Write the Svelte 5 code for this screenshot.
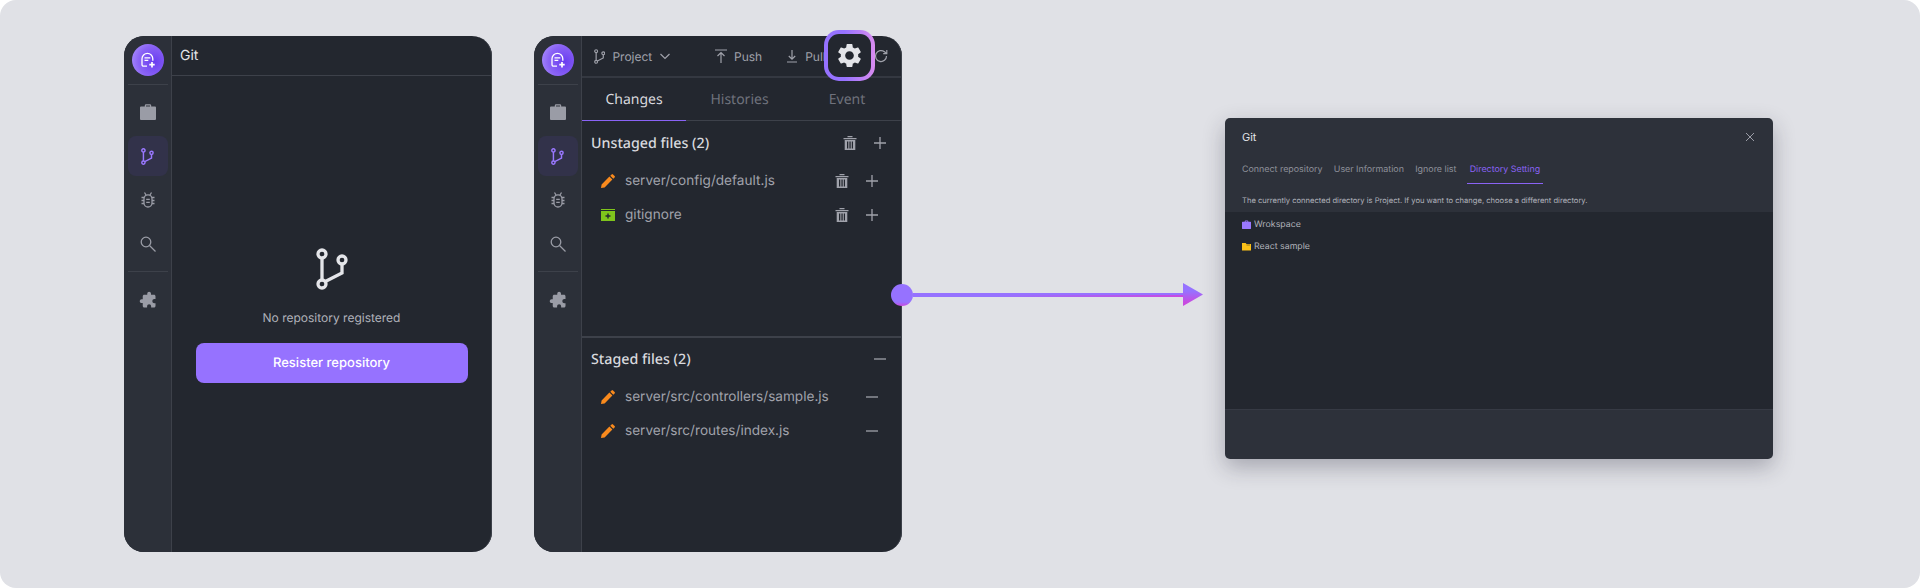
<script>
  const navIcons = ['case', 'git', 'bug', 'search'];

  const unstaged = [
    { name: 'server/config/default.js', icon: 'pencil' },
    { name: 'gitignore', icon: 'box' }
  ];
  const staged = [
    { name: 'server/src/controllers/sample.js', icon: 'pencil' },
    { name: 'server/src/routes/index.js', icon: 'pencil' }
  ];
  const modalTabs = ['Connect repository', 'User Information', 'Ignore list', 'Directory Setting'];
</script>

{#snippet gitIcon(height, color, width = 3.3)}
  <svg width={height * 32 / 42} {height} viewBox="0 0 32 42" fill="none" stroke={color} stroke-width={width}>
    <circle cx="6" cy="6" r="4" />
    <circle cx="6" cy="36" r="4" />
    <circle cx="26" cy="12" r="4" />
    <path d="M6 10v22M9.300 33.500L26 25V16" />
  </svg>
{/snippet}

{#snippet navIcon(name)}
  {#if name === 'case'}
    <svg width="18" height="18" viewBox="0 0 18 18" fill="#9a9ca6">
      <path d="M5.800 3.500V2.600A1.300 1.300 0 0 1 7.100 1.300h3.800a1.300 1.300 0 0 1 1.300 1.300v.9H16a1 1 0 0 1 1 1V16a1 1 0 0 1-1 1H2a1 1 0 0 1-1-1V4.500a1 1 0 0 1 1-1zM7 2.500v1h4v-1z" fill-rule="evenodd" />
    </svg>
  {:else if name === 'git'}
    {@render gitIcon(17, '#9a78ff', 3.6)}
  {:else if name === 'bug'}
    <svg width="18" height="18" viewBox="0 0 18 18" fill="none" stroke="#9a9ca6" stroke-width="1.300">
      <rect x="5" y="3.800" width="8" height="12.200" rx="4" />
      <path d="M7.200 8.300h3.600M7.200 11.300h3.600M5.500 1.500l1.500 2.500M12.500 1.500l-1.500 2.500M2.500 6.500h2.500M2.500 9.500h2.500M2.500 12.500h2.500M13 6.500h2.500M13 9.500h2.500M13 12.500h2.500" />
    </svg>
  {:else}
    <svg width="18" height="18" viewBox="0 0 18 18" fill="none" stroke="#9a9ca6" stroke-width="1.300">
      <circle cx="7" cy="7" r="4.800" />
      <path d="M10.500 10.500l6 6" />
    </svg>
  {/if}
{/snippet}

{#snippet sidebar()}
  <aside class="sidebar">
    <div class="logo">
      <svg width="16" height="16" viewBox="0 0 16 16" fill="none" stroke="#fff" stroke-width="1.300">
        <path d="M7 14.200H3.500A1.500 1.500 0 0 1 2 12.700V6.800a5.400 5.400 0 0 1 10.800 0v2" />
        <path d="M4.500 5.800h5.800M4.500 8.300h3.800" stroke-width="1.200" />
        <path d="M12 10v5.400M9.300 12.700h5.400" stroke-width="1.700" />
      </svg>
    </div>
    <div class="rule"></div>
    <nav class="nav">
      {#each navIcons as icon}
        <div class="nav-item" class:active={icon === 'git'}>
          {@render navIcon(icon)}
        </div>
      {/each}
    </nav>
    <div class="rule"></div>
    <div class="nav-item">
      <svg class="puzzle" width="18" height="18" viewBox="0 0 24 24" fill="#9a9ca6">
        <path d="M20.500 11H19V7c0-1.100-.9-2-2-2h-4V3.500C13 2.120 11.880 1 10.500 1S8 2.120 8 3.500V5H4c-1.100 0-1.990.9-1.990 2v3.800H3.500c1.490 0 2.700 1.210 2.700 2.700s-1.210 2.700-2.700 2.700H2V20c0 1.100.9 2 2 2h3.800v-1.500c0-1.490 1.210-2.700 2.700-2.700 1.490 0 2.700 1.210 2.700 2.700V22H17c1.100 0 2-.9 2-2v-4h1.500c1.380 0 2.500-1.120 2.500-2.500S21.880 11 20.500 11z" />
      </svg>
    </div>
  </aside>
{/snippet}

{#snippet fileIcon(kind)}
  {#if kind === 'pencil'}
    <svg width="14" height="14" viewBox="0 0 14 14" fill="#f98a1d">
      <path d="M0 14l.6-3.600L8.400 2.600l3 3-7.800 7.800zM9.300 1.700L10.600.4a1 1 0 0 1 1.400 0l1.600 1.600a1 1 0 0 1 0 1.400l-1.300 1.300z" />
    </svg>
  {:else}
    <svg width="14" height="14" viewBox="0 0 14 14">
      <path d="M0 1h14v1H0z" fill="#7fc41c" />
      <path d="M0 3h14v10H0z" fill="#7fc41c" />
      <path d="M7 5.500v5M4.500 8h5" stroke="#23272f" stroke-width="1.400" />
    </svg>
  {/if}
{/snippet}

{#snippet trash()}
  <svg class="act" width="14" height="14" viewBox="0 0 14 14" fill="#a0a2ab">
    <path d="M0.500 2h13v1.300H.500zM4.500 0h5v1.300h-5zM1.700 4h10.600v10H1.700zM4 5.500v7h1.300v-7zM6.400 5.500v7h1.300v-7zM8.800 5.500v7H10v-7z" fill-rule="evenodd" />
  </svg>
{/snippet}

{#snippet plus()}
  <svg class="act" width="14" height="14" viewBox="0 0 14 14" stroke="#a0a2ab" stroke-width="1.300">
    <path d="M7 1v12M1 7h12" />
  </svg>
{/snippet}

{#snippet minus()}
  <svg class="act" width="14" height="14" viewBox="0 0 14 14" stroke="#a0a2ab" stroke-width="1.300">
    <path d="M1 7h12" />
  </svg>
{/snippet}

<main class="page">
  <section class="panel">
    {@render sidebar()}
    <div class="content">
      <header class="title-bar">Git</header>
      <div class="empty">
        {@render gitIcon(42, '#e4e5e9')}
        <p class="empty-text">No repository registered</p>
        <button class="primary">Resister repository</button>
      </div>
    </div>
  </section>

  <section class="panel">
    {@render sidebar()}
    <div class="content">
      <header class="toolbar">
        <div class="branch">
          {@render gitIcon(15, '#a0a2ab')}
          <span>Project</span>
          <svg width="12" height="12" viewBox="0 0 12 12" fill="none" stroke="#a0a2ab" stroke-width="1.200"><path d="M1.500 4l4.500 4.500L10.500 4" /></svg>
        </div>
        <div class="tool">
          <svg width="14" height="14" viewBox="0 0 14 14" fill="none" stroke="#a0a2ab" stroke-width="1.200"><path d="M1 1h12M7 14V3.500M3.500 7L7 3.500 10.500 7" /></svg>
          <span>Push</span>
        </div>
        <div class="tool pull">
          <svg width="14" height="14" viewBox="0 0 14 14" fill="none" stroke="#a0a2ab" stroke-width="1.200"><path d="M2 13h10M7 1v9M3.800 7L7 10.200 10.200 7" /></svg>
          <span>Pull</span>
        </div>
        <svg class="refresh" width="14" height="14" viewBox="0 0 14 14" fill="none" stroke="#a0a2ab" stroke-width="1.200"><path d="M12.500 7A5.500 5.500 0 1 1 10.500 2.800L12.500 4.500M12.800 1v3.600H9.200" /></svg>
      </header>

      <div class="tabs">
        <div class="tab current">Changes</div>
        <div class="tab histories">Histories</div>
        <div class="tab event">Event</div>
      </div>

      <div class="group unstaged">
        <div class="group-head">
          <h2>Unstaged files (2)</h2>
          <div class="acts">{@render trash()}{@render plus()}</div>
        </div>
        {#each unstaged as file}
          <div class="file">
            {@render fileIcon(file.icon)}
            <span class="file-name">{file.name}</span>
            <div class="acts">{@render trash()}{@render plus()}</div>
          </div>
        {/each}
      </div>

      <div class="group">
        <div class="group-head">
          <h2>Staged files (2)</h2>
          <div class="acts">{@render minus()}</div>
        </div>
        {#each staged as file}
          <div class="file">
            {@render fileIcon(file.icon)}
            <span class="file-name">{file.name}</span>
            <div class="acts">{@render minus()}</div>
          </div>
        {/each}
      </div>
    </div>

    <div class="ring">
      <svg width="29" height="29" viewBox="0 0 24 24" fill="#e4e5e9">
        <path d="M19.140 12.940c.04-.3.06-.61.06-.94 0-.32-.02-.64-.07-.94l2.030-1.580c.18-.14.23-.41.12-.61l-1.920-3.320c-.12-.22-.37-.29-.59-.22l-2.390.96c-.5-.38-1.030-.7-1.620-.94l-.36-2.540c-.04-.24-.24-.41-.48-.41h-3.840c-.24 0-.43.17-.47.41l-.36 2.540c-.59.24-1.130.57-1.620.94l-2.390-.96c-.22-.08-.47 0-.59.22L2.740 8.870c-.12.21-.08.47.12.61l2.030 1.580c-.05.3-.09.63-.09.94s.02.64.07.94l-2.030 1.580c-.18.14-.23.41-.12.61l1.920 3.320c.12.22.37.29.59.22l2.390-.96c.5.38 1.030.7 1.620.94l.36 2.540c.05.24.24.41.48.41h3.840c.24 0 .44-.17.47-.41l.36-2.540c.59-.24 1.130-.56 1.620-.94l2.390.96c.22.08.47 0 .59-.22l1.920-3.320c.12-.22.07-.47-.12-.61l-2.010-1.580zM12 15.600c-1.980 0-3.600-1.620-3.600-3.600s1.620-3.600 3.600-3.600 3.600 1.620 3.600 3.600-1.620 3.600-3.600 3.600z" />
      </svg>
    </div>

    <div class="connector">
      <span class="dot"></span>
      <span class="line"></span>
      <span class="head"></span>
    </div>
  </section>

  <section class="modal">
    <div class="modal-top">
      <div class="modal-title">
        <span>Git</span>
        <svg width="10" height="10" viewBox="0 0 10 10" stroke="#9a9ca6" stroke-width="1"><path d="M1 1l8 8M9 1L1 9" /></svg>
      </div>
      <div class="modal-tabs">
        {#each modalTabs as tab}
          <div class="modal-tab" class:on={tab === 'Directory Setting'}>{tab}</div>
        {/each}
      </div>
      <p class="note">The currently connected directory is Project. If you want to change, choose a different directory.</p>
    </div>
    <div class="modal-body">
      <div class="dir">
        <svg width="9" height="9" viewBox="0 0 10 10" fill="#9a78ff"><path fill-rule="evenodd" d="M3 1.500A1 1 0 0 1 4 .5h2a1 1 0 0 1 1 1V2h2.500a.5.5 0 0 1 .5.500V9.500a.5.5 0 0 1-.5.5H.5a.5.5 0 0 1-.5-.5V2.500A.5.500 0 0 1 .5 2H3zM4 1.300V2h2v-.7z" /></svg>
        Wrokspace
      </div>
      <div class="dir">
        <svg width="9" height="9" viewBox="0 0 10 10" fill="#fbc118"><path d="M0 1h4l1 1.200h5V9.500H0z" /><path d="M5 3h4v.7H5z" fill="#23272f" /></svg>
        React sample
      </div>
    </div>
    <div class="modal-foot"></div>
  </section>
</main>

<style>
  :global(body) {
    margin: 0;
    background: #fff;
  }
  .page {
    width: 1920px;
    height: 588px;
    background: #e0e1e6;
    border-radius: 16px;
    font-family: Inter, sans-serif;
    text-rendering: geometricPrecision;
    overflow: hidden;
    box-sizing: border-box;
    padding: 36px 0 0 124px;
    display: flex;
    align-items: flex-start;
    gap: 42px;
  }
  .panel {
    width: 368px;
    height: 516px;
    flex: none;
    background: #23272f;
    border-radius: 20px;
    display: flex;
    position: relative;
    box-sizing: border-box;
  }
  .sidebar {
    width: 48px;
    flex: none;
    background: #2c3039;
    border-right: 1px solid #3d414a;
    border-radius: 20px 0 0 20px;
    box-sizing: border-box;
    display: flex;
    flex-direction: column;
    align-items: center;
    padding-top: 8px;
  }
  .logo {
    width: 32px;
    height: 32px;
    border-radius: 50%;
    background: radial-gradient(circle at 70% 55%, #6a3df0 0%, #8a63f5 55%, #b39bff 100%);
    display: flex;
    align-items: center;
    justify-content: center;
    flex: none;
  }
  .rule {
    width: 40px;
    height: 1px;
    background: #3d414a;
    margin-top: 8px;
    flex: none;
  }
  .nav {
    display: flex;
    flex-direction: column;
    gap: 4px;
    margin-top: 7px;
  }
  .nav-item {
    width: 40px;
    height: 40px;
    flex: none;
    border-radius: 8px;
    display: flex;
    align-items: center;
    justify-content: center;
  }
  .nav + .rule {
    margin-top: 7px;
  }
  .rule + .nav-item {
    margin-top: 8px;
  }
  .nav-item.active {
    background: #32324a;
  }
  .puzzle {
    transform: scaleX(-1);
  }
  .content {
    flex: 1;
    min-width: 0;
    display: flex;
    flex-direction: column;
    border-right: 1px solid #3d414a;
    border-radius: 0 20px 20px 0;
  }
  .title-bar {
    height: 39px;
    border-bottom: 1px solid #3d414a;
    color: #e4e5e9;
    font-size: 14px;
    line-height: 39px;
    padding-left: 8px;
    flex: none;
  }
  .empty {
    flex: 1;
    display: flex;
    flex-direction: column;
    align-items: center;
    padding-top: 172px;
  }
  .empty-text {
    margin: 20px 0 0;
    font-size: 12px;
    line-height: 16px;
    color: #b0b2ba;
  }
  .primary {
    margin-top: 17px;
    width: 272px;
    height: 40px;
    border: 0;
    border-radius: 8px;
    background: #9672ff;
    color: #fff;
    font-family: Inter, sans-serif;
    font-size: 13px;
    font-weight: 500;
    text-rendering: geometricPrecision;
  }
  .toolbar {
    height: 42px;
    flex: none;
    border-bottom: 2px solid #343841;
    display: flex;
    align-items: center;
    color: #a0a2ab;
    font-size: 12px;
    padding-left: 12px;
    box-sizing: border-box;
  }
  .branch {
    display: flex;
    align-items: center;
    gap: 7px;
    width: 120px;
  }
  .tool {
    display: flex;
    align-items: center;
    gap: 6px;
  }
  .pull {
    margin-left: 23px;
  }
  .refresh {
    margin-left: auto;
    margin-right: 13px;
  }
  .tabs {
    height: 43px;
    flex: none;
    display: flex;
    border-bottom: 1px solid #3d414a;
    box-sizing: border-box;
  }
  .tab {
    width: 104px;
    flex: none;
    text-align: center;
    font-family: "Noto Sans", sans-serif;
    font-size: 14px;
    line-height: 44px;
    color: #6f727c;
    height: 43px;
    box-sizing: border-box;
  }
  .tab.histories {
    width: 107px;
  }
  .tab.event {
    width: auto;
    flex: 1;
  }
  .tab.current {
    color: #d8d9de;
    border-bottom: 1px solid #8a63f5;
  }
  .group {
    padding: 0 9px;
  }
  .unstaged {
    height: 217px;
    box-sizing: border-box;
    border-bottom: 2px solid #3d414a;
    flex: none;
    padding-top: 1px;
  }
  .group-head {
    height: 42px;
    display: flex;
    align-items: center;
    justify-content: space-between;
  }
  h2 {
    margin: 0;
    font-family: "Noto Sans", sans-serif;
    font-size: 14.250px;
    font-weight: 500;
    color: #d8d9de;
  }
  .acts {
    display: flex;
    gap: 16px;
    align-items: center;
  }
  .group-head .acts {
    margin-right: 5px;
  }
  .file {
    height: 34px;
    display: flex;
    align-items: center;
    padding: 0 13px 0 10px;
  }
  .file-name {
    flex: 1;
    margin-left: 10px;
    font-size: 13.600px;
    color: #a0a2ab;
  }
  .act {
    display: block;
  }
  .ring {
    position: absolute;
    left: 290px;
    top: -6px;
    width: 51px;
    height: 51px;
    box-sizing: border-box;
    border: 4px solid transparent;
    border-radius: 15px;
    background: linear-gradient(#23272f, #23272f) padding-box, linear-gradient(90deg, #9672ff 40%, #d98cf0) border-box;
    display: flex;
    align-items: center;
    justify-content: center;
  }
  .connector {
    position: absolute;
    left: 357px;
    top: 247px;
    display: flex;
    align-items: center;
  }
  .dot {
    width: 22px;
    height: 22px;
    border-radius: 50%;
    background: linear-gradient(#9672ff 82%, #c94ae0);
    flex: none;
  }
  .line {
    width: 270px;
    height: 4px;
    background: linear-gradient(#9672ff 50%, transparent 50%), linear-gradient(90deg, #9672ff 30%, #c94ae0);
    flex: none;
  }
  .head {
    width: 20px;
    height: 23px;
    clip-path: polygon(0 0, 100% 50%, 0 100%);
    background: linear-gradient(#9672ff 35%, #c94ae0 85%);
    flex: none;
  }
  .modal {
    flex: none;
    margin: 82px 0 0 281px;
    width: 548px;
    height: 341px;
    border-radius: 5px;
    overflow: hidden;
    background: #2d313a;
    box-shadow: 0 8px 22px rgba(30, 30, 50, 0.3);
    display: flex;
    flex-direction: column;
  }
  .modal-top {
    height: 94px;
    flex: none;
    box-sizing: border-box;
    padding: 0 18px 0 17px;
  }
  .modal-title {
    display: flex;
    justify-content: space-between;
    align-items: center;
    height: 38px;
    color: #e4e5e9;
    font-size: 11px;
  }
  .modal-tabs {
    display: flex;
    gap: 11.300px;
    margin-top: 4px;
    font-size: 8.900px;
    color: #8f919a;
  }
  .modal-tab {
    height: 24px;
    line-height: 19px;
    box-sizing: border-box;
  }
  .modal-tab.on {
    color: #8a63f5;
    border-bottom: 1.500px solid #8a63f5;
    padding: 0 3px;
    margin-left: -1px;
  }
  .note {
    margin: 11px 0 0;
    font-size: 7.600px;
    line-height: 12px;
    color: #b0b2ba;
    white-space: nowrap;
  }
  .modal-body {
    flex: 1;
    background: #23272f;
    padding: 1px 17px 0;
  }
  .dir {
    display: flex;
    align-items: center;
    gap: 3px;
    height: 22px;
    font-size: 8.800px;
    color: #b0b2ba;
  }
  .modal-foot {
    height: 49px;
    flex: none;
    border-top: 1px solid #363a44;
  }
</style>
